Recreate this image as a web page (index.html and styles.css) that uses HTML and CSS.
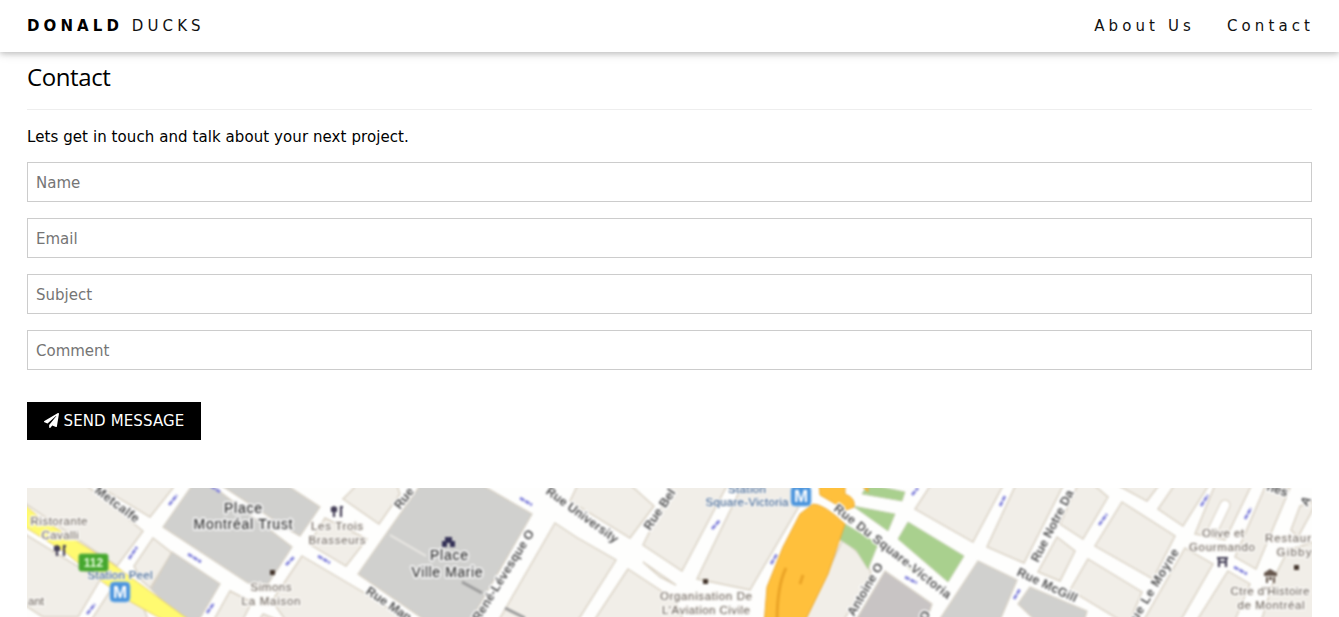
FILE: index.html
```
<!DOCTYPE html>
<html lang="en">
<head>
<meta charset="utf-8">
<title>Donald Ducks</title>
<link rel="stylesheet" href="styles.css">
</head>
<body>
<header class="bar">
  <a class="brand"><b>DONALD</b> DUCKS</a>
  <nav class="links"><a>About Us</a><a>Contact</a></nav>
</header>
<main class="content">
  <h3 class="title">Contact</h3>
  <p class="lead">Lets get in touch and talk about your next project.</p>
  <form class="form">
    <input class="field" type="text" placeholder="Name">
    <input class="field" type="text" placeholder="Email">
    <input class="field" type="text" placeholder="Subject">
    <input class="field" type="text" placeholder="Comment">
    <button class="send" type="button"><svg class="plane" viewBox="0 0 512 512"><path d="M476 3.2L12.500 270.600c-18.100 10.400-15.800 35.600 2.200 43.200L121 358.400l287.300-253.200c5.500-4.900 13.300 2.600 8.600 8.300L176 407v80.500c0 23.600 28.500 32.900 42.500 15.800L282 426l124.600 52.200c14.200 6 30.400-2.900 33-18.200l72-432C515 7.800 493.300-6.800 476 3.200z"/></svg> SEND MESSAGE</button>
  </form>
  <svg class="map" viewBox="27 488 1285 129">
    <g class="soft">
      <g class="block">
        <path d="M20 480H80L143 531L117 566L20 500z"/>
        <path d="M20 531L100 580L78 617H43L20 602z"/>
        <path d="M102 480V488L150 517L173 488V480z"/>
        <path d="M153 538L172 553L150 588L141 580L134 566z"/>
        <path d="M134 582L150 625H88L110 591z"/>
        <path d="M230 591L252 602L240 625H211z"/>
        <path d="M263 614L290 625H256z"/>
        <path d="M302 556L363 592L415 625H289L272 601z"/>
        <path d="M309 544L346 566L367 539L325 518z"/>
        <path d="M354 480V488L343 499L379 524L400 494L395 480z"/>
        <path d="M555 523L576 537L616 560L575 625H496z"/>
        <path d="M580 480L570 501L630 538L654 506L625 480z"/>
        <path d="M675 480L643 545L682 571L730 480z"/>
        <path d="M628 569L675 600L685 625H591z"/>
        <path d="M643 562L676 585L660 577z"/>
        <path d="M745 480L697 579L750 590L805 496L800 480z"/>
        <path d="M843 539L866 560L871 573L841 625H803z"/>
        <path d="M934 480L915 509L973 542L1006 480z"/>
        <path d="M1018 480L987 547L1024 563L1066 480z"/>
        <path d="M1080 480L1060 524L1083 539L1108 497L1088 480z"/>
        <path d="M1057 537L1075 551L1060 581L1038 572z"/>
        <path d="M1088 559L1142 592L1128 625L1070 590z"/>
        <path d="M1122 502L1175 536L1153 579L1095 546z"/>
        <path d="M1108 480L1147 501L1163 480z"/>
        <path d="M1178 480L1158 509L1183 526L1212 480z"/>
        <path d="M1217 480L1195 534L1225 540L1254 480z"/>
        <path d="M1268 480L1235 557L1256 569L1290 488z"/>
        <path d="M1185 548L1213 564L1178 625H1141z"/>
        <path d="M1228 571L1250 584L1233 625H1194z"/>
        <path d="M1300 506L1291 530L1298 537L1318 500z"/>
        <path d="M1288 550L1275 576L1260 625H1320V540z"/>
      </g>
      <g class="built">
        <path d="M163 527L196 480H205L292 547L268 584L248 583z"/>
        <path d="M213 480L291 531L300 536L320 507L285 484z"/>
        <path d="M172 552L220 584L196 625H187L151 589z"/>
        <path d="M424 480L358 574L432 625H468L532 514L480 484z"/>
        <path class="mauve" d="M885 571L932 604L925 625H853z"/>
        <path d="M978 561L1017 580L998 625H936z"/>
        <path d="M1030 587L1087 611L1083 625H1040L1018 604z"/>
      </g>
      <path class="alley" d="M390 535L426 556"/>
      <path class="alley rim" d="M1213 530L1225 505"/>
      <path class="alley wide" d="M1212 532L1225 505"/>
      <path class="path" d="M462 582L482 593M505 608L525 618"/>
      <path class="yellow" d="M20 501L40 518L72 538L110 562L140 584L196 625H172L131 602L90 573L65 552L20 524z"/>
      <g class="green">
        <path d="M868 484L905 492L902 501L862 494z"/>
        <path d="M853 506L895 514L888 531z"/>
        <path d="M842 522L878 544L868 569L856 550L839 539z"/>
        <path d="M908 522L964 556L948 582L898 539z"/>
      </g>
      <path class="trim" d="M890 554L930 583"/>
      <g class="orange">
        <path d="M813 504Q824 504 845 524L828 574L803 625H764L767 587L783 547L800 514z"/>
        <path d="M819 480H845V494Q856 498 854 507L846 510L820 495zM857 480H868V492z"/>
      </g>
      <path class="crease" d="M786 568Q777 586 777 622M803 575L800 584"/>
      <g class="arrows">
        <path d="M169 505L177 495M129 559L137 547M188 554L201 562M87 614L95 604M207 613L214 603M286 565L294 557M318 556L330 563M520 498L532 505M712 529L720 520M771 564L777 554M905 577L917 583M912 495L918 488M1000 506L1005 496M1014 599L1020 589M1099 525L1107 514M1201 506L1208 495M1245 519L1251 508M1234 567L1247 574M211 486L220 492"/>
      </g>
      <g class="street">
        <text transform="translate(94 492) rotate(37)" textLength="52">Metcalfe</text>
        <text transform="translate(400 510) rotate(-52)">Rue</text>
        <text transform="translate(365 593) rotate(34)">Rue Man</text>
        <text transform="translate(479 622) rotate(-58)" textLength="105">René-Lévesque O</text>
        <text transform="translate(545 493) rotate(36)" textLength="86">Rue University</text>
        <text transform="translate(650 531) rotate(-56)">Rue Bel</text>
        <text transform="translate(833 510) rotate(38)" textLength="145">Rue Du Square-Victoria</text>
        <text transform="translate(854 617) rotate(-60)" textLength="59">Antoine O</text>
        <text transform="translate(926 622) rotate(-60)">O</text>
        <text transform="translate(1038 563) rotate(-63)">Rue Notre Da</text>
        <text transform="translate(1016 575) rotate(25)" textLength="65">Rue McGill</text>
        <text transform="translate(1137 622) rotate(-59)" textLength="82">ue Le Moyne</text>
        <text transform="translate(1266 490) rotate(18)">nes</text>
        <text transform="translate(1307 507) rotate(-60)">A</text>
      </g>
      <g class="place major">
        <text x="243" y="513" textLength="38">Place</text>
        <text x="243" y="529" textLength="99">Montréal Trust</text>
        <text x="449" y="560" textLength="38">Place</text>
        <text x="447" y="577" textLength="71">Ville Marie</text>
      </g>
      <g class="place">
        <text x="59" y="525" textLength="57">Ristorante</text>
        <text x="60" y="539" textLength="37">Cavalli</text>
        <text x="36" y="605">ant</text>
        <text x="337" y="530" textLength="52">Les Trois</text>
        <text x="337" y="544" textLength="57">Brasseurs</text>
        <text x="271" y="591" textLength="41">Simons</text>
        <text x="271" y="605" textLength="59">La Maison</text>
        <text x="706" y="600" textLength="92">Organisation De</text>
        <text x="706" y="614" textLength="88">L'Aviation Civile</text>
        <text x="1223" y="537" textLength="42">Olive et</text>
        <text x="1222" y="551" textLength="66">Gourmando</text>
        <text x="1288" y="542" textLength="46">Restaur</text>
        <text x="1294" y="556" textLength="35">Gibby</text>
        <text x="1270" y="595" textLength="79">Ctre d'Histoire</text>
        <text x="1271" y="609" textLength="67">de Montréal</text>
      </g>
      <g class="metro">
        <text x="120" y="579" textLength="65">Station Peel</text>
        <text x="747" y="493" textLength="38">Station</text>
        <text x="747" y="506" textLength="83">Square-Victoria</text>
      </g>
      <rect class="route" x="79" y="554" width="29" height="17" rx="2"/>
      <text class="num" x="93.500" y="567">112</text>
      <rect class="station" x="110" y="582" width="20" height="20" rx="4"/>
      <text class="m" x="120" y="598">M</text>
      <rect class="station" x="791" y="486" width="20" height="20" rx="4"/>
      <text class="m" x="801" y="502">M</text>
      <path class="fork" d="M57 545V556M64 545V556M55 546V550H59V546M334 506V517M341 506V517M332 507V511H336V507M63 546H66M340 507H343M1219 557V567M1226 557V567M1217 558H1228M1218 562H1227"/>
      <path class="hotel" d="M442 541H445V537H452V541H455V547H450V543H447V547H442z"/>
      <path class="museum" d="M1264 573L1270 569L1277 573V576H1264zM1266 577H1268V583H1266zM1273 577H1275V583H1273zM1269 577H1272V580H1269z"/>
      <path class="dot" d="M270 570h5v5h-5zM703 579h5v5h-5zM1294 565h5v5h-5z"/>
    </g>
  </svg>
</main>
</body>
</html>
```
FILE: styles.css
```
* { box-sizing: border-box; }
body {
  margin: 0;
  height: 617px;
  overflow: hidden;
  background: #fff;
  color: #000;
  font: 15px/22.5px Verdana, "DejaVu Sans", sans-serif;
}
.bar {
  position: relative;
  display: flex;
  justify-content: space-between;
  height: 52px;
  padding: 15px 25px 0 27px;
  background: #fff;
  letter-spacing: 4.1px;
  box-shadow: 0 2px 5px 0 rgba(0,0,0,.16), 0 2px 10px 0 rgba(0,0,0,.12);
}
.brand, .links { color: #111; }
.brand b { color: #000; }
.brand { white-space: nowrap; }
.links { display: flex; gap: 32px; }
.content { padding: 0 27px; }
.title {
  margin: 0;
  height: 58px;
  padding-top: 7px;
  border-bottom: 1px solid #eee;
  font: 400 24px/36px "Open Sans", "Noto Sans", sans-serif;
  letter-spacing: -.4px;
}
.lead { margin: 16px 0 13px; letter-spacing: .08px; }
.form { display: flex; flex-direction: column; gap: 16px; }
.field {
  width: 100%;
  height: 40px;
  padding: 9px 8px 7px;
  border: 1px solid #ccc;
  border-radius: 0;
  background: #fff;
  font: inherit;
}
.field::placeholder { color: #757575; opacity: 1; }
.send {
  align-self: flex-start;
  width: 174px;
  height: 38px;
  margin-top: 16px;
  padding: 2px 15px 0;
  border: 0;
  background: #000;
  color: #fff;
  font: inherit;
  letter-spacing: .12px;
  white-space: nowrap;
}
.plane { width: 15px; height: 15px; fill: #fff; vertical-align: -2px; }
.map { display: block; width: 1285px; height: 129px; margin-top: 48px; background: #fefefd; }
.soft { filter: blur(.9px); }
.block { fill: #f1eee8; stroke: #d8d0c2; stroke-width: 1.4; }
.built { fill: #d0d0ce; stroke: #d6cfc2; stroke-width: 1.2; }
.mauve { fill: #c8c4c4; }
.alley { fill: none; stroke: #ebe9e5; stroke-width: 2; }
.rim { stroke: #d8d0c2; stroke-width: 11; stroke-linecap: round; }
.wide { stroke: #fff; stroke-width: 9; stroke-linecap: round; }
.path { fill: none; stroke: #9c9c9c; stroke-width: 3; }
.yellow { fill: #fffa70; stroke: #e4cc72; }
.green { fill: #a9d08e; stroke: #c2cfac; }
.trim { stroke: #cbd0ae; stroke-width: 2; }
.orange { fill: #ffc03c; stroke: #eaaa36; }
.crease { fill: none; stroke: #eba427; stroke-width: 3; }
.arrows { fill: none; stroke: #8585dc; stroke-width: 2.8; stroke-dasharray: 5 1; }
.map text { font-family: Arial, "Liberation Sans", sans-serif; paint-order: stroke; stroke-linejoin: round; }
.street { font-size: 12.5px; font-weight: bold; fill: #555; stroke: #fff; stroke-width: 3; }
.place { font-size: 11.5px; fill: #665e57; stroke: #faf8f5; stroke-width: 3; text-anchor: middle; }
.major { font-size: 14px; fill: #222; stroke: #eee; stroke-width: 4; }
.metro { font-size: 11.5px; fill: #2c5488; stroke: #f6f6f5; stroke-width: 2; text-anchor: middle; }
.route { fill: #45a72e; stroke: #67b14e; }
.num { fill: #e9ffdf; font-size: 12px; font-weight: bold; text-anchor: middle; }
.station { fill: #4a94dc; stroke: #8bbcea; }
.m { fill: #fff; font-size: 17px; font-weight: bold; text-anchor: middle; }
.fork { fill: none; stroke: #454058; stroke-width: 2.2; }
.hotel { fill: #353258; }
.museum { fill: #66574d; }
.dot { fill: #46382f; }
```
